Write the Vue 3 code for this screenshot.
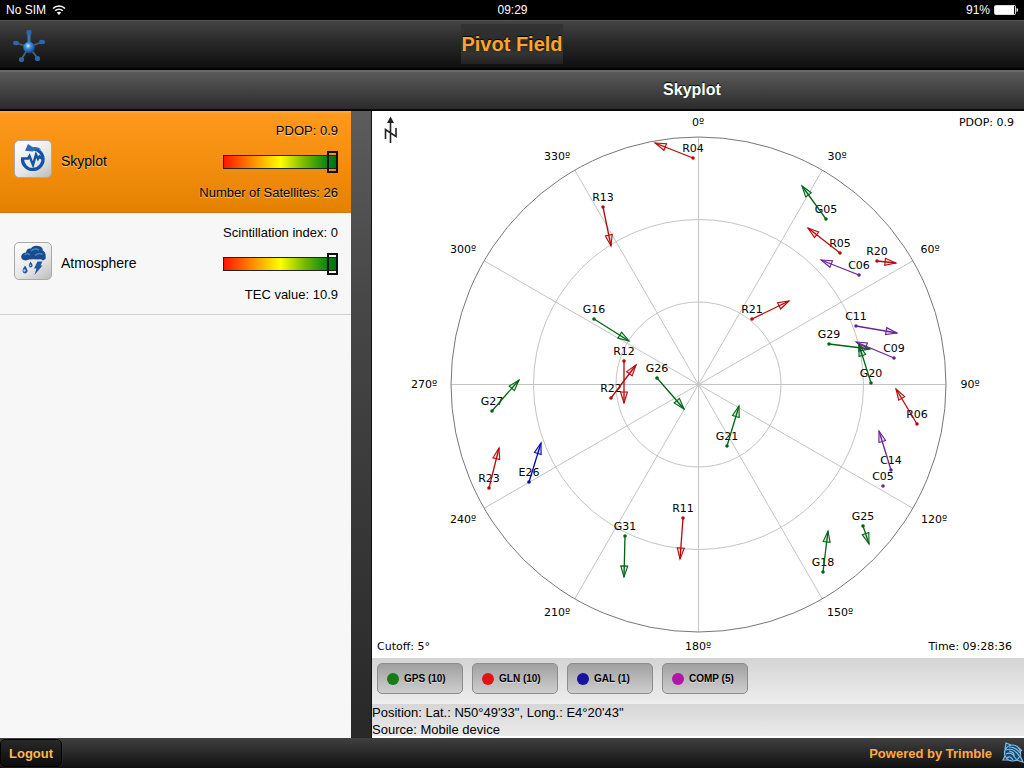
<script setup>
const items = [
  { name: 'Skyplot', icon: 'skyplot', top: 'PDOP: 0.9', bottom: 'Number of Satellites: 26', level: 100, active: true },
  { name: 'Atmosphere', icon: 'atmosphere', top: 'Scintillation index: 0', bottom: 'TEC value: 10.9', level: 100, active: false },
]

const systems = [
  { key: 'gps', label: 'GPS (10)' },
  { key: 'gln', label: 'GLN (10)' },
  { key: 'gal', label: 'GAL (1)' },
  { key: 'comp', label: 'COMP (5)' },
]

const center = { x: 698.5, y: 384.5 }
const radius = 247.5

const spokes = Array.from({ length: 12 }, (_, i) => {
  const a = (i * Math.PI) / 6
  return { x: center.x + radius * Math.sin(a), y: center.y - radius * Math.cos(a) }
})

const bearings = [
  [0, 698, 126], [30, 837, 160], [60, 930, 253], [90, 970, 388],
  [120, 934, 523], [150, 840, 616], [180, 698, 650], [210, 557, 616],
  [240, 463, 523], [270, 424, 388], [300, 463, 253], [330, 557, 160],
]

// id, current position, end of the motion arrow
const tracks = [
  ['R04', 693, 158, 655, 143],
  ['R13', 603, 207, 611, 246],
  ['G05', 826, 219, 802, 186],
  ['R05', 840, 253, 808, 228],
  ['R20', 877, 261, 896, 263],
  ['C06', 859, 275, 821, 260],
  ['R21', 752, 319, 789, 301],
  ['C11', 856, 326, 897, 333],
  ['G29', 829, 344, 870, 349],
  ['C09', 894, 358, 856, 342],
  ['G20', 871, 383, 859, 345],
  ['R06', 917, 424, 896, 389],
  ['C14', 891, 470, 879, 431],
  ['C05', 883, 486, 883, 486],
  ['G25', 863, 526, 869, 544],
  ['G18', 823, 572, 828, 531],
  ['G21', 727, 446, 739, 406],
  ['R11', 683, 518, 680, 559],
  ['G31', 625, 536, 624, 577],
  ['E26', 529, 482, 541, 443],
  ['R23', 489, 488, 499, 448],
  ['G27', 492, 411, 519, 380],
  ['R22', 611, 398, 636, 365],
  ['R12', 624, 361, 624, 403],
  ['G26', 657, 378, 684, 409],
  ['G16', 594, 319, 629, 341],
]

function arrowHead(x1, y1, x2, y2) {
  const length = Math.hypot(x2 - x1, y2 - y1)
  if (!length) return ''
  const ux = (x2 - x1) / length
  const uy = (y2 - y1) / length
  const bx = x2 - ux * 11
  const by = y2 - uy * 11
  return `M${x2} ${y2}L${bx - uy * 3.5} ${by + ux * 3.5}L${bx + uy * 3.5} ${by - ux * 3.5}Z`
}

const satellites = tracks.map(([id, x, y, tx, ty]) => ({
  id, x, y, tx, ty, kind: 'sat-' + id[0].toLowerCase(), head: arrowHead(x, y, tx, ty),
}))
</script>

<template>
  <div class="screen">
    <div class="status">
      <span class="carrier">
        No SIM
        <svg class="wifi" viewBox="0 0 14 10" aria-hidden="true">
          <path d="M1 3.6C4.300 .2 9.700 .2 13 3.600M3.200 5.800C5.400 3.700 8.600 3.700 10.800 5.800" fill="none" stroke="#fff" stroke-width="1.500" />
          <path d="M4.800 7.600C6 6.500 8 6.500 9.200 7.600L7 9.900Z" fill="#fff" />
        </svg>
      </span>
      <span>09:29</span>
      <span class="power">
        91%
        <svg class="battery" viewBox="0 0 25 10" aria-hidden="true">
          <rect x=".5" y=".5" width="21" height="9" rx="1" fill="none" stroke="#ddd" />
          <rect x="1" y="1" width="19" height="8" fill="#fff" />
          <path d="M23 3.500q1.500 1.500 0 3z" fill="#ddd" stroke="#ddd" />
        </svg>
      </span>
    </div>

    <header class="header">
      <svg class="hub" viewBox="0 0 36 36" aria-hidden="true">
        <defs>
          <radialGradient id="ball" cx=".42" cy=".35" r=".65">
            <stop offset="0" stop-color="#d4efff" />
            <stop offset=".35" stop-color="#4593dc" />
            <stop offset="1" stop-color="#0c3f8c" />
          </radialGradient>
        </defs>
        <path d="M18 19L5 15M18 19L31 14M18 19L10.500 31M18 19L26.500 30" stroke="#46607f" stroke-width="1.800" />
        <path d="M18 15V4" stroke="#3d78b5" stroke-width="3" />
        <g fill="#2b67ab">
          <rect x="15.500" y="2" width="5" height="5" rx="1" />
          <ellipse cx="5" cy="15" rx="3" ry="2.200" />
          <ellipse cx="31" cy="14" rx="3" ry="2.200" />
          <circle cx="10.500" cy="31.500" r="2.600" />
          <circle cx="26.500" cy="30.500" r="2.600" />
        </g>
        <circle cx="18" cy="19.500" r="5.800" fill="url(#ball)" />
      </svg>
      <h1>Pivot Field</h1>
    </header>
    <div class="subheader"><h2>Skyplot</h2></div>

    <main class="main">
      <nav class="sidebar">
        <button v-for="item in items" :key="item.name" type="button" class="item" :class="{ active: item.active }">
          <span class="tile">
            <svg v-if="item.icon === 'skyplot'" viewBox="1 1 36 36" aria-hidden="true">
              <path d="M8.500 18.500A10.300 10.300 0 1 0 15 9.600" fill="none" stroke="#1551a5" stroke-width="3.200" />
              <path d="M14 4L19 7.200Q24 6 27.500 9.500Q22 8.500 18.500 11.500L11 10.800Z" fill="#2a6ab8" />
              <path d="M7 18.500H14L15.500 16L19 25L22 14.500L24 19L25.500 16.500L28 19" fill="none" stroke="#1551a5" stroke-width="2.400" />
            </svg>
            <svg v-else viewBox="1 1 36 36" aria-hidden="true">
              <path d="M11.500 18.500Q7 18 7.200 14.500Q8 10.500 12 10.500Q12.500 6 17 6.500Q19 3 24.500 4Q29 5 28.800 8.500Q32.500 10.500 31.500 17L29 18.500Q27 16.500 24 17.500Q17 16.500 11.500 18.500Z" fill="#174c8f" />
              <path d="M10.500 13Q13 10.500 16 13M17 9Q21 5.500 25 8M21 13.500Q25 10 28.500 12.500" fill="none" stroke="#4a84be" stroke-width="1.500" />
              <path d="M23.500 19.500H28.500L26.500 23.500H28.500L20.500 33L22.500 26.500H20Z" fill="#1d57a3" />
              <path d="M16.500 19.500Q20.500 24.500 16.800 25.500Q13 25 16.500 19.500ZM11 23.500Q16 30 11.200 31.500Q6 30.500 11 23.500Z" fill="#1d57a3" />
              <circle cx="10.500" cy="28.500" r="1.200" fill="#b7d5ef" />
              <circle cx="16.500" cy="23.300" r=".8" fill="#b7d5ef" />
            </svg>
          </span>
          <span class="name">{{ item.name }}</span>
          <span class="readings">
            <span>{{ item.top }}</span>
            <span class="gauge">
              <span class="track"><span class="thumb" :style="{ left: item.level + '%' }"></span></span>
            </span>
            <span>{{ item.bottom }}</span>
          </span>
        </button>
      </nav>

      <section class="content">
        <svg class="plot" viewBox="372 111 652 547" role="img" aria-label="Skyplot">
          <g class="grid">
            <line v-for="(s, i) in spokes" :key="i" :x1="center.x" :y1="center.y" :x2="s.x" :y2="s.y" />
            <circle :cx="center.x" :cy="center.y" r="82.500" />
            <circle :cx="center.x" :cy="center.y" r="165" />
            <circle class="horizon" :cx="center.x" :cy="center.y" :r="radius" />
          </g>
          <path d="M390.500 122V143M385.500 139V129.500L396 136.500V128" fill="none" stroke="#222" stroke-width="1.600" />
          <path d="M390.500 116.500L394 123H387Z" fill="#222" />
          <text v-for="[deg, x, y] in bearings" :key="deg" :x="x" :y="y" text-anchor="middle">{{ deg }}º</text>
          <text x="1014" y="126" text-anchor="end">PDOP: 0.9</text>
          <text x="377" y="650">Cutoff: 5°</text>
          <text x="1012" y="650" text-anchor="end">Time: 09:28:36</text>
          <g v-for="s in satellites" :key="s.id" :class="s.kind">
            <text :x="s.x" :y="s.y - 6" text-anchor="middle">{{ s.id }}</text>
            <line :x1="s.x" :y1="s.y" :x2="s.tx" :y2="s.ty" />
            <path class="head" :d="s.head" />
            <circle :cx="s.x" :cy="s.y" r="1.800" />
          </g>
        </svg>
        <div class="legend">
          <button v-for="s in systems" :key="s.key" type="button" class="system">
            <span class="dot" :class="s.key"></span>{{ s.label }}
          </button>
        </div>
        <div class="info">
          <div>Position: Lat.: N50°49'33", Long.: E4°20'43"</div>
          <div>Source: Mobile device</div>
        </div>
      </section>
    </main>

    <footer class="footer">
      <button type="button" class="logout">Logout</button>
      <span class="powered">
        Powered by Trimble
        <svg class="globe" viewBox="0 0 22 22" aria-hidden="true">
          <path d="M4 1Q12 1 18 6L21 19L17 18Q8 22 2 16Q0 8 4 1Z" fill="#17466e" />
          <g fill="none" stroke="#86bde2" stroke-width="1.200">
            <circle cx="10.500" cy="11" r="8" />
            <path d="M3 7L4 1L9 3M17 6L20 9M14 18L21 20L18 14M3 14L1 18L6 18" />
            <path d="M4 8Q12 5 17 14M7 5Q14 5 18 11M4 12Q10 9 14 17M5 16Q8 13 11 18M7 9Q13 10 12 15" />
          </g>
        </svg>
      </span>
    </footer>
  </div>
</template>

<style>
body { background: #000; }
</style>

<style scoped>
.screen {
  display: flex;
  flex-direction: column;
  height: 100vh;
  min-height: 480px;
  overflow: hidden;
  font-family: "Liberation Sans", Arial, sans-serif;
  font-size: 13px;
  color: #000;
}
button { font-family: inherit; cursor: pointer; }
h1, h2 { margin: 0; }
.status {
  display: grid;
  grid-template-columns: 1fr auto 1fr;
  align-items: center;
  height: 20px;
  padding: 0 5px 0 6px;
  background: #000;
  color: #fff;
  font-size: 12px;
}
.carrier, .power { display: flex; align-items: center; gap: 6px; }
.power { justify-content: flex-end; gap: 4px; }
.wifi { width: 14px; height: 10px; }
.battery { width: 25px; height: 10px; }
.header {
  display: grid;
  grid-template-columns: 1fr auto 1fr;
  box-sizing: border-box;
  height: 50px;
  border-top: 1px solid #555;
  border-bottom: 2px solid #000;
  background: linear-gradient(#444, #2b2b2b 40%, #0e0e0e);
}
.hub { width: 36px; height: 36px; margin: 7px 0 0 11px; }
h1 {
  height: 40px;
  margin-top: 3px;
  background: linear-gradient(#333, #2c2c2c 45%, #333 75%, #222);
  color: #ffa42c;
  font-size: 20px;
  line-height: 40px;
  text-shadow: 0 -1px 1px #000;
}
.subheader {
  box-sizing: border-box;
  height: 41px;
  padding-left: 360px;
  border-top: 2px solid #686868;
  border-bottom: 2px solid #080808;
  background: linear-gradient(#5a5a5a, #2b2b2b);
}
h2 {
  color: #fff;
  font-size: 16px;
  line-height: 36px;
  text-align: center;
  text-shadow: 0 -1px 1px #000;
}
.main { display: flex; flex: 1; min-height: 0; background: linear-gradient(#5c5c5c, #474747 30%, #282828); }
.sidebar { flex: 0 0 351px; background: #f7f7f7; }
.item {
  display: flex;
  align-items: center;
  width: 100%;
  height: 102px;
  padding: 0 13px 0 14px;
  border: 0;
  border-bottom: 1px solid #d0d0d0;
  background: #f7f7f7;
  color: #000;
  font-size: 13px;
  text-align: left;
  text-shadow: 0 1px 0 #fff;
}
.item.active {
  border-bottom-color: #c87810;
  background: linear-gradient(#ffad45, #ff991c 3%, #f38d0d 55%, #e48200);
  text-shadow: 0 1px 1px #ffd79c;
}
.tile {
  box-sizing: border-box;
  width: 38px;
  height: 38px;
  margin-bottom: 6px;
  border: 1px solid #aaa;
  border-radius: 5px;
  background: linear-gradient(145deg, #fff, #e6e6e6 60%, #bcbcbc);
}
.tile svg { display: block; width: 36px; height: 36px; }
.name { margin-left: 9px; padding-bottom: 2px; font-size: 14px; }
.readings {
  display: grid;
  grid-template-rows: repeat(3, 31px);
  align-items: center;
  justify-items: end;
  margin-left: auto;
}
.gauge { display: flex; width: 115px; }
.track {
  position: relative;
  box-sizing: border-box;
  width: 100%;
  height: 14px;
  border: 1px solid #222;
  background: linear-gradient(90deg, #ff1500, #ff8a00 25%, #ffff00 50%, #80bd00 70%, #0b8a12 90%, #046c12);
}
.thumb {
  position: absolute;
  top: 50%;
  box-sizing: border-box;
  width: 11px;
  height: 22px;
  border: 2px solid #101010;
  transform: translate(-10px, -50%);
}
.content {
  display: flex;
  flex: 1;
  flex-direction: column;
  min-width: 0;
  margin-left: 20px;
  border-left: 1px solid #111;
  background: #fff;
}
.plot {
  display: block;
  flex: 1;
  width: 100%;
  min-height: 0;
  font-family: "DejaVu Sans", Verdana, sans-serif;
  font-size: 11px;
}
.grid { fill: none; stroke: #c4c4c4; }
.sat-g { stroke: #006414; --sat: #006414; }
.sat-r { stroke: #b50a0a; --sat: #b50a0a; }
.sat-c { stroke: #6a2496; --sat: #6a2496; }
.sat-e { stroke: #0808a8; --sat: #0808a8; }
.plot g text { stroke: none; fill: #000; }
.plot g line { stroke-width: 1.3; }
.plot .grid line { stroke-width: 1; }
.plot g .head { fill: var(--sat); fill-opacity: 0.12; stroke-width: 1.1; }
.plot g > circle { stroke: none; fill: var(--sat); }
.plot .grid > circle { fill: none; stroke: #c4c4c4; }
.plot .grid > .horizon { stroke: #777; }
.legend {
  display: flex;
  gap: 9px;
  box-sizing: border-box;
  height: 46px;
  padding: 5px 5px 9px;
  background: linear-gradient(#d4d4d4, #eee);
}
.system {
  display: flex;
  align-items: center;
  gap: 5px;
  width: 86px;
  height: 31px;
  padding: 0 9px;
  border: 1px solid #8c8c8c;
  border-radius: 5px;
  background: linear-gradient(#a0a0a0, #cecece);
  color: #000;
  font-size: 10px;
  font-weight: bold;
  white-space: nowrap;
  text-shadow: 0 1px 0 #ddd;
}
.dot { flex: none; width: 12px; height: 12px; border-radius: 50%; }
.gps { background: #167d16; }
.gln { background: #e31313; }
.gal { background: #1414a0; }
.comp { background: #b116a8; }
.info {
  box-sizing: border-box;
  height: 34px;
  border-bottom: 2px solid #fff;
  background: linear-gradient(#d6d6d6, #ebebeb);
  line-height: 17px;
}
.footer {
  display: flex;
  align-items: center;
  justify-content: space-between;
  height: 30px;
  background: linear-gradient(#404040, #101010);
}
.logout {
  box-sizing: border-box;
  height: 28px;
  padding: 0 8px;
  border: 1px solid #000;
  border-radius: 5px;
  background: linear-gradient(#282828, #0d0d0d);
  color: #ffb850;
  font-size: 13px;
  font-weight: bold;
  box-shadow: 0 0 1px #666;
}
.powered {
  display: flex;
  align-items: center;
  gap: 10px;
  color: #ffaa40;
  font-weight: bold;
}
.globe { width: 22px; height: 22px; }
</style>
